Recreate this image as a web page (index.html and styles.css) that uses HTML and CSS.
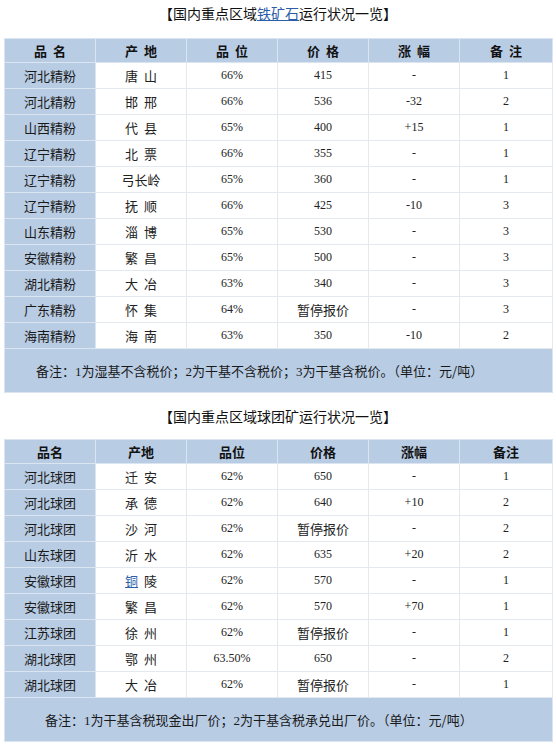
FILE: index.html
```html
<!DOCTYPE html>
<html lang="zh">
<head>
<meta charset="utf-8">
<link rel="stylesheet" href="styles.css">
</head>
<body>
<div class="page">
  <div class="title">【国内重点区域<a class="link" href="#">铁矿石</a>运行状况一览】</div>
  <table class="grid">
    <colgroup><col class="c1"><col class="c2"><col class="c3"><col class="c4"><col class="c5"><col class="c6"></colgroup>
    <thead>
      <tr><th>品 名</th><th>产 地</th><th>品 位</th><th>价 格</th><th>涨 幅</th><th>备 注</th></tr>
    </thead>
    <tbody>
      <tr><td class="name">河北精粉</td><td class="cjk">唐&nbsp; 山</td><td>66%</td><td>415</td><td>-</td><td>1</td></tr>
      <tr><td class="name">河北精粉</td><td class="cjk">邯&nbsp; 邢</td><td>66%</td><td>536</td><td>-32</td><td>2</td></tr>
      <tr><td class="name">山西精粉</td><td class="cjk">代&nbsp; 县</td><td>65%</td><td>400</td><td>+15</td><td>1</td></tr>
      <tr><td class="name">辽宁精粉</td><td class="cjk">北&nbsp; 票</td><td>66%</td><td>355</td><td>-</td><td>1</td></tr>
      <tr><td class="name">辽宁精粉</td><td class="cjk">弓长岭</td><td>65%</td><td>360</td><td>-</td><td>1</td></tr>
      <tr><td class="name">辽宁精粉</td><td class="cjk">抚&nbsp; 顺</td><td>66%</td><td>425</td><td>-10</td><td>3</td></tr>
      <tr><td class="name">山东精粉</td><td class="cjk">淄&nbsp; 博</td><td>65%</td><td>530</td><td>-</td><td>3</td></tr>
      <tr><td class="name">安徽精粉</td><td class="cjk">繁&nbsp; 昌</td><td>65%</td><td>500</td><td>-</td><td>3</td></tr>
      <tr><td class="name">湖北精粉</td><td class="cjk">大&nbsp; 冶</td><td>63%</td><td>340</td><td>-</td><td>3</td></tr>
      <tr><td class="name">广东精粉</td><td class="cjk">怀&nbsp; 集</td><td>64%</td><td class="cjk">暂停报价</td><td>-</td><td>3</td></tr>
      <tr><td class="name">海南精粉</td><td class="cjk">海&nbsp; 南</td><td>63%</td><td>350</td><td>-10</td><td>2</td></tr>
      <tr><td class="note" colspan="6">备注：<span class="num">1</span>为湿基不含税价；<span class="num">2</span>为干基不含税价；<span class="num">3</span>为干基含税价。（单位：元/吨）</td></tr>
    </tbody>
  </table>

  <div class="title second">【国内重点区域球团矿运行状况一览】</div>
  <table class="grid">
    <colgroup><col class="c1"><col class="c2"><col class="c3"><col class="c4"><col class="c5"><col class="c6"></colgroup>
    <thead>
      <tr><th>品名</th><th>产地</th><th>品位</th><th>价格</th><th>涨幅</th><th>备注</th></tr>
    </thead>
    <tbody>
      <tr><td class="name">河北球团</td><td class="cjk">迁&nbsp; 安</td><td>62%</td><td>650</td><td>-</td><td>1</td></tr>
      <tr><td class="name">河北球团</td><td class="cjk">承&nbsp; 德</td><td>62%</td><td>640</td><td>+10</td><td>2</td></tr>
      <tr><td class="name">河北球团</td><td class="cjk">沙&nbsp; 河</td><td>62%</td><td class="cjk">暂停报价</td><td>-</td><td>2</td></tr>
      <tr><td class="name">山东球团</td><td class="cjk">沂&nbsp; 水</td><td>62%</td><td>635</td><td>+20</td><td>2</td></tr>
      <tr><td class="name">安徽球团</td><td class="cjk"><a class="link" href="#">铜</a>&nbsp; 陵</td><td>62%</td><td>570</td><td>-</td><td>1</td></tr>
      <tr><td class="name">安徽球团</td><td class="cjk">繁&nbsp; 昌</td><td>62%</td><td>570</td><td>+70</td><td>1</td></tr>
      <tr><td class="name">江苏球团</td><td class="cjk">徐&nbsp; 州</td><td>62%</td><td class="cjk">暂停报价</td><td>-</td><td>1</td></tr>
      <tr><td class="name">湖北球团</td><td class="cjk">鄂&nbsp; 州</td><td>63.50%</td><td>650</td><td>-</td><td>2</td></tr>
      <tr><td class="name">湖北球团</td><td class="cjk">大&nbsp; 冶</td><td>62%</td><td class="cjk">暂停报价</td><td>-</td><td>1</td></tr>
      <tr><td class="note note-wide" colspan="6">备注：<span class="num">1</span>为干基含税现金出厂价；<span class="num">2</span>为干基含税承兑出厂价。（单位：元/吨）</td></tr>
    </tbody>
  </table>
</div>
</body>
</html>
```
FILE: styles.css
```css
html, body {
  margin: 0;
  padding: 0;
  background: #ffffff;
}
.page {
  padding: 0 4px;
  font-family: "Noto Sans CJK SC", "Noto Sans", sans-serif;
  color: #1a1a1a;
}
.title {
  height: 28px;
  line-height: 26px;
  text-align: center;
  font-size: 14px;
  color: #111;
  margin-bottom: 10px;
}
.title.second {
  margin-top: 11px;
  margin-bottom: 11px;
  height: 24px;
  line-height: 24px;
}
.link {
  color: #2a5ea8;
  text-decoration: underline;
}
.grid {
  width: 548px;
  border-collapse: collapse;
  table-layout: fixed;
}
.c1, .c2, .c3, .c4, .c5 { width: 91px; }
.c6 { width: 93px; }
.grid th {
  background: #b8cce4;
  height: 23px;
  padding: 0;
  font-size: 13px;
  font-weight: bold;
  color: #111;
  border: 1px solid #dbe5f1;
  text-align: center;
  line-height: 23px;
  word-spacing: 3px;
}
.grid td {
  height: 25px;
  padding: 0;
  text-align: center;
  border: 1px solid #e4e9ef;
  font-family: "Liberation Serif", serif;
  font-size: 12px;
  color: #222;
  line-height: 25px;
}
.grid td.cjk {
  font-family: "Noto Sans CJK SC", sans-serif;
  font-size: 13px;
}
.grid td.name {
  background: #b8cce4;
  font-family: "Noto Sans CJK SC", sans-serif;
  font-size: 13px;
  color: #1a1a1a;
  border-color: #dbe5f1;
}
.grid td.note {
  background: #b8cce4;
  height: 43px;
  text-align: left;
  padding-left: 31px;
  font-family: "Noto Sans CJK SC", sans-serif;
  font-size: 13px;
  color: #1a1a1a;
  border-color: #dbe5f1;
}
.grid td.note-wide {
  padding-left: 40px;
}
.num {
  font-family: "Liberation Serif", serif;
  font-size: 13px;
}
```
